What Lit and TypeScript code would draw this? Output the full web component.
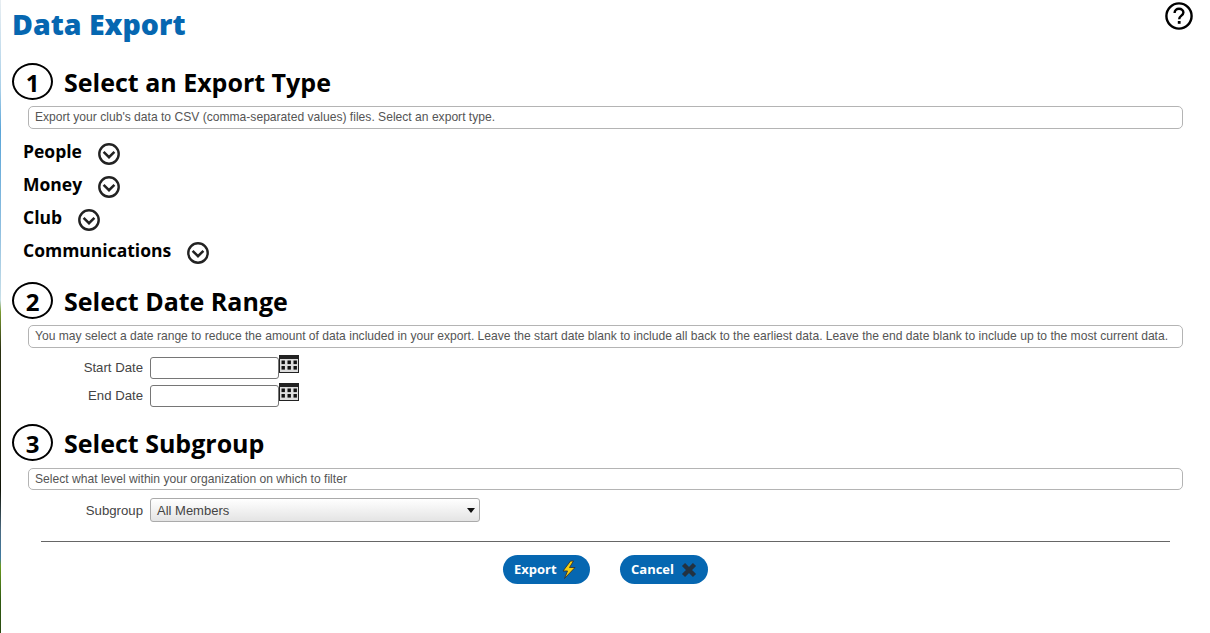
import { LitElement, html, css, svg } from "lit";
import { customElement } from "lit/decorators.js";

const chevron = html`<svg class="chev" viewBox="0 0 22 22" width="22" height="22">
  <circle cx="11" cy="11" r="9.7" fill="#fff" stroke="#222" stroke-width="2.4"></circle>
  <path d="M5.6 8.8 L11 14.2 L16.4 8.8" fill="none" stroke="#222" stroke-width="2.5"></path>
</svg>`;

const calendar = html`<svg class="cal" viewBox="0 0 20 18" width="20" height="18">
  <rect width="20" height="18" fill="#222"></rect>
  <rect x="1" y="4" width="18" height="13" fill="#ddd"></rect>
  ${[2.5, 8.5, 14.5].flatMap((x) =>
    [5.5, 11].map((y) => svg`<rect x="${x}" y="${y}" width="3.4" height="3.6" fill="#111"></rect>`)
  )}
</svg>`;

@customElement("app-root")
export class AppRoot extends LitElement {
  static styles = css`
    :host {
      display: block;
      position: relative;
      box-sizing: border-box;
      height: 633px;
      background: #fff;
      font-family: "Liberation Sans", Arial, sans-serif;
      overflow: hidden;
      padding-left: 1px;
    }
    .edge {
      position: absolute;
      left: 0;
      top: 0;
      bottom: 0;
      width: 1px;
      background: linear-gradient(
        #e8eef2 0,
        #a8cfe8 90px,
        #5aa5d8 130px,
        #8fbfe0 230px,
        #c8dfe8 300px,
        #7a9a30 312px,
        #2a3010 350px,
        #101408 490px,
        #4a6a80 530px,
        #3f7aa0 558px,
        #6a9a20 566px,
        #2f5a10 600px,
        #2a4a10 633px
      );
    }
    h1 {
      margin: 0;
      padding: 5px 0 0 11px;
      height: 63px;
      box-sizing: border-box;
      font: 800 28.5px/38px "Open Sans", sans-serif;
      color: #0667b1;
    }
    .help {
      position: absolute;
      left: 1165px;
      top: 2px;
    }
    .step {
      display: flex;
      align-items: center;
      gap: 11px;
      height: 37px;
      margin-left: 11px;
    }
    .num {
      box-sizing: border-box;
      width: 41px;
      height: 37px;
      padding-top: 2px;
      border: 2px solid #000;
      border-radius: 50%;
      display: flex;
      align-items: center;
      justify-content: center;
      font: 700 24px/1 "Open Sans", sans-serif;
      color: #000;
    }
    h2 {
      margin: 0;
      padding-top: 1px;
      font: 700 25px/34px "Open Sans", sans-serif;
      color: #000;
    }
    .desc {
      box-sizing: border-box;
      margin: 6px 0 0 27px;
      width: 1155px;
      height: 23px;
      border: 1px solid #b4b4b4;
      border-radius: 5px;
      padding-left: 6px;
      font-size: 12.1px;
      line-height: 20px;
      color: #555;
      white-space: nowrap;
    }
    .desc.last {
      margin-top: 7px;
      height: 22px;
    }
    .cats {
      margin: 6px 0 0 22px;
      height: 147px;
      display: flex;
      flex-direction: column;
    }
    .cat {
      display: flex;
      align-items: flex-start;
      gap: 16px;
      height: 33px;
      font: 700 17.5px/33px "Open Sans", sans-serif;
      color: #000;
    }
    .chev {
      margin-top: 8px;
    }
    .form {
      display: flex;
      flex-direction: column;
      gap: 6px;
      margin-top: 9px;
    }
    .form.last {
      margin-top: 8px;
    }
    .row {
      display: flex;
      align-items: flex-start;
    }
    .lbl {
      width: 142px;
      padding-right: 7px;
      box-sizing: content-box;
      text-align: right;
      font-size: 13.2px;
      line-height: 21px;
      color: #444;
    }
    .lbl2 {
      line-height: 25px;
    }
    .input {
      box-sizing: border-box;
      width: 129px;
      height: 22px;
      border: 1px solid #767676;
      border-radius: 3px;
      background: #fff;
    }
    .cal {
      margin-top: -2px;
    }
    .spacer {
      height: 17px;
    }
    .select {
      box-sizing: border-box;
      width: 330px;
      height: 24px;
      border: 1px solid #aaa;
      border-radius: 3px;
      background: linear-gradient(#fff, #e4e4e4);
      display: flex;
      align-items: center;
      justify-content: space-between;
      padding: 0 4px 0 6px;
      font-size: 13px;
      color: #444;
    }
    .caret {
      width: 0;
      height: 0;
      border-left: 4px solid transparent;
      border-right: 4px solid transparent;
      border-top: 5px solid #111;
    }
    hr {
      margin: 18px 0 0 40px;
      width: 1129px;
      height: 1px;
      border: 0;
      background: #666;
    }
    .actions {
      display: flex;
      justify-content: flex-start;
      gap: 30px;
      margin: 13px 0 0 502px;
    }
    .btn {
      box-sizing: border-box;
      height: 29px;
      border-radius: 15px;
      background: #0667b1;
      color: #fff;
      font: 700 13px/29px "Open Sans", sans-serif;
      display: flex;
      align-items: center;
      gap: 5px;
      padding-left: 11px;
      border: 0;
    }
    .export {
      width: 87px;
    }
    .cancel {
      width: 88px;
      gap: 7px;
    }
  `;

  private step(n: string, title: string) {
    return html`<div class="step"><span class="num">${n}</span><h2>${title}</h2></div>`;
  }

  render() {
    return html`
      <div class="edge"></div>
      <h1>Data Export</h1>
      <svg class="help" viewBox="0 0 28 28" width="28" height="28">
        <circle cx="14" cy="14" r="12.6" fill="#fff" stroke="#000" stroke-width="2.4"></circle>
        <path d="M9.6 11 C9.6 8.2 11.6 6.8 14 6.8 C16.6 6.8 18.4 8.4 18.4 10.6 C18.4 13.6 14.2 13.8 14.2 17.2" fill="none" stroke="#000" stroke-width="2.4"></path>
        <rect x="12.8" y="19" width="2.8" height="2.8" fill="#000"></rect>
      </svg>

      ${this.step("1", "Select an Export Type")}
      <div class="desc">Export your club's data to CSV (comma-separated values) files. Select an export type.</div>
      <div class="cats">
        ${["People", "Money", "Club", "Communications"].map(
          (c) => html`<div class="cat"><span>${c}</span>${chevron}</div>`
        )}
      </div>

      ${this.step("2", "Select Date Range")}
      <div class="desc">You may select a date range to reduce the amount of data included in your export. Leave the start date blank to include all back to the earliest data. Leave the end date blank to include up to the most current data.</div>
      <div class="form">
        <div class="row"><span class="lbl">Start Date</span><div class="input"></div>${calendar}</div>
        <div class="row"><span class="lbl">End Date</span><div class="input"></div>${calendar}</div>
      </div>

      <div class="spacer"></div>
      ${this.step("3", "Select Subgroup")}
      <div class="desc last">Select what level within your organization on which to filter</div>
      <div class="form last">
        <div class="row"><span class="lbl lbl2">Subgroup</span><div class="select"><span>All Members</span><span class="caret"></span></div></div>
      </div>

      <hr />
      <div class="actions">
        <div class="btn export">Export
          <svg viewBox="3 0 13 19" width="14" height="19">
            <path d="M11 1 L3.5 11 L8 11 L5 18.5 L15.5 7.5 L10 7.5 L14 1 Z" fill="#f5cf10" stroke="#333" stroke-width="0.9"></path>
          </svg>
        </div>
        <div class="btn cancel">Cancel
          <svg viewBox="0 0 16 16" width="16" height="16">
            <path d="M2.5 2.5 L13.5 13.5 M13.5 2.5 L2.5 13.5" stroke="#233240" stroke-width="4.4" fill="none"></path>
          </svg>
        </div>
      </div>
    `;
  }
}
